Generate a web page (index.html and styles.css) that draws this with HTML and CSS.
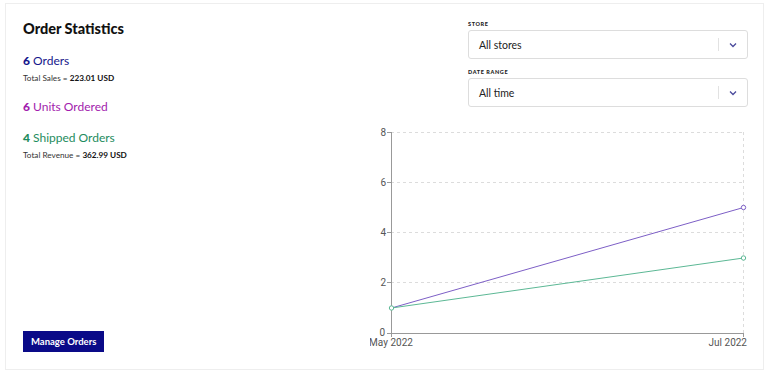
FILE: index.html
```html
<!DOCTYPE html>
<html lang="en">
<head>
    <meta charset="UTF-8">
    <meta name="viewport" content="width=device-width, initial-scale=1.0">
    <title>Order Statistics</title>
    <link rel="stylesheet" href="styles.css">
</head>
<body>
    <div class="card">
        <div class="stats">
            <h2>Order Statistics</h2>
            <div class="stat orders"><b>6</b> Orders</div>
            <div class="sub">Total Sales = <b>223.01 USD</b></div>
            <div class="stat units"><b>6</b> Units Ordered</div>
            <div class="stat shipped"><b>4</b> Shipped Orders</div>
            <div class="sub">Total Revenue = <b>362.99 USD</b></div>
            <button class="manage">Manage Orders</button>
        </div>

        <div class="side">
            <div class="filters">
                <label class="field-label">Store</label>
                <div class="select">
                    <span>All stores</span>
                    <span class="sep"></span>
                    <svg class="chev" width="8" height="6" viewBox="0 0 8 6"><path d="M1 1.5 L4 4.5 L7 1.5" fill="none" stroke="#4a4a9c" stroke-width="1.3"/></svg>
                </div>
                <label class="field-label">Date range</label>
                <div class="select">
                    <span>All time</span>
                    <span class="sep"></span>
                    <svg class="chev" width="8" height="6" viewBox="0 0 8 6"><path d="M1 1.5 L4 4.5 L7 1.5" fill="none" stroke="#4a4a9c" stroke-width="1.3"/></svg>
                </div>
            </div>

            <!-- chart: y(v) = 208 - v * 25.125 -->
            <svg class="chart" width="380" height="228" viewBox="0 0 380 228">
                <g stroke="#dcdcdc" stroke-width="1" stroke-dasharray="3 3">
                    <line x1="21" y1="7.5" x2="373" y2="7.5"/>
                    <line x1="21" y1="57.5" x2="373" y2="57.5"/>
                    <line x1="21" y1="107.5" x2="373" y2="107.5"/>
                    <line x1="21" y1="157.5" x2="373" y2="157.5"/>
                    <line x1="373.5" y1="7" x2="373.5" y2="208"/>
                </g>
                <g stroke="#999" stroke-width="1">
                    <line x1="21.5" y1="7" x2="21.5" y2="208"/>
                    <line x1="21" y1="208.5" x2="374" y2="208.5"/>
                    <line x1="17" y1="7.5" x2="21" y2="7.5"/>
                    <line x1="17" y1="57.5" x2="21" y2="57.5"/>
                    <line x1="17" y1="107.5" x2="21" y2="107.5"/>
                    <line x1="17" y1="157.5" x2="21" y2="157.5"/>
                    <line x1="17" y1="208.5" x2="21" y2="208.5"/>
                    <line x1="21.5" y1="208" x2="21.5" y2="212"/>
                    <line x1="373.5" y1="208" x2="373.5" y2="212"/>
                </g>
                <g class="tick" text-anchor="end">
                    <text x="16" y="11">8</text>
                    <text x="16" y="61">6</text>
                    <text x="16" y="111">4</text>
                    <text x="16" y="161">2</text>
                    <text x="15" y="211">0</text>
                </g>
                <text class="tick" x="21" y="221" text-anchor="middle">May 2022</text>
                <text class="tick" x="377" y="221" text-anchor="end">Jul 2022</text>
                <polyline points="21.5,183 373.5,82.5" fill="none" stroke="#7d5fc6" stroke-width="1"/>
                <polyline points="21.5,183 373.5,133" fill="none" stroke="#5cb895" stroke-width="1"/>
                <circle cx="373.5" cy="82.5" r="2.2" fill="#fff" stroke="#7d5fc6"/>
                <circle cx="373.5" cy="133" r="2.2" fill="#fff" stroke="#5cb895"/>
                <circle cx="21.5" cy="183" r="2.2" fill="#fff" stroke="#5cb895"/>
            </svg>
        </div>
    </div>
</body>
</html>
```

FILE: styles.css
```css
body {
    margin: 0;
    background-color: #ffffff;
    font-family: 'Lato', sans-serif;
    color: #222;
}
.card {
    display: flex;
    margin: 3px 4px 0 5px;
    height: 367px;
    border: 1px solid #eeeeee;
    box-sizing: border-box;
}
.stats {
    display: flex;
    flex-direction: column;
    align-items: flex-start;
    padding: 16px 0 17px 17px;
    flex: 1;
}
h2 {
    margin: 0 0 16px;
    font-size: 14.5px;
    font-weight: 900;
    color: #111;
}
.stat {
    font-size: 12px;
}
.stat b {
    font-weight: 900;
}
.orders {
    color: #16168c;
}
.units {
    color: #a21cad;
    margin: 16px 0 16px;
}
.shipped {
    color: #1e8c5e;
}
.sub {
    margin-top: 5px;
    font-size: 8.2px;
    color: #333;
}
.sub b {
    color: #111;
}
.manage {
    margin-top: auto;
    padding: 0 8px;
    height: 21px;
    border: none;
    background-color: #0a0a88; /* navy button */
    color: white;
    font-family: 'Lato', sans-serif;
    font-size: 9.5px;
    font-weight: 700;
    cursor: pointer;
}
.side {
    display: flex;
    flex-direction: column;
    width: 380px;
    margin-right: 13px;
}
.filters {
    display: flex;
    flex-direction: column;
    align-self: flex-end;
    width: 280px;
    margin: 17px 2px 0 0;
}
.field-label {
    font-size: 5.5px;
    font-weight: 900;
    letter-spacing: 0.6px;
    text-transform: uppercase;
    color: #222;
    margin-bottom: 3px;
}
.select {
    display: flex;
    align-items: center;
    height: 29px;
    box-sizing: border-box;
    border: 1px solid #dddddd;
    border-radius: 3px;
    padding: 0 10px;
    font-size: 10.5px;
    color: #222;
    margin-bottom: 10px;
}
.select span:first-child {
    flex: 1;
}
.sep {
    width: 1px;
    height: 13px;
    background-color: #e2e2e2;
    margin-right: 10px;
}
.chart {
    display: block;
    margin-top: 8px;
}
.tick {
    font-family: 'Roboto', sans-serif;
    font-size: 10px;
    fill: #555;
}
```
